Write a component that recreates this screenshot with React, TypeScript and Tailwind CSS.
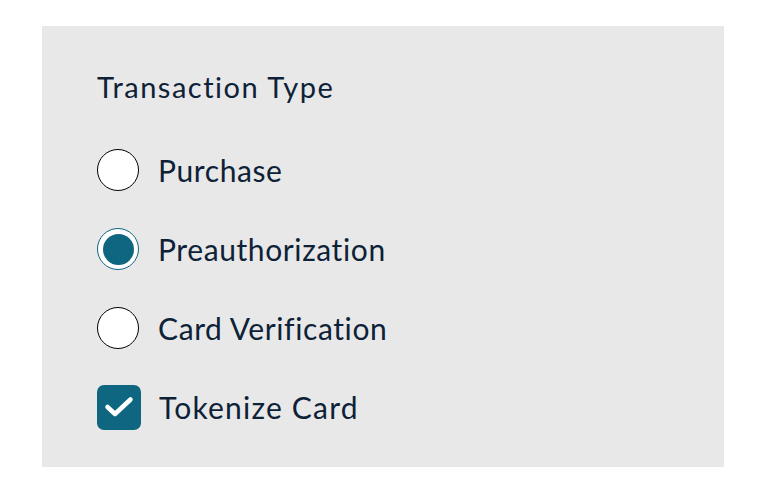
import React from 'react';

type Option = { label: string; checked: boolean };

const options: Option[] = [
  { label: 'Purchase', checked: false },
  { label: 'Preauthorization', checked: true },
  { label: 'Card Verification', checked: false },
];

const Radio: React.FC<Option> = ({ label, checked }) => (
  <label className="flex items-center gap-[19px] h-[44px]">
    {checked ? (
      <span className="w-[42px] h-[42px] rounded-full bg-white border-[1.5px] border-[#106680] flex items-center justify-center">
        <span className="w-[31px] h-[31px] rounded-full bg-[#0f6680]" />
      </span>
    ) : (
      <span className="w-[42px] h-[42px] rounded-full bg-white border-[1.5px] border-black" />
    )}
    <span>{label}</span>
  </label>
);

export default function App() {
  return (
    <div className="w-[764px] h-[498px] bg-white pt-[26px] pl-[42px]">
      <div
        className="w-[682px] h-[441px] bg-[#e8e8e8] pt-[43px] pl-[55px] text-[#0d2137] text-[30px] tracking-[0.6px]"
        style={{ fontFamily: 'Lato, "Noto Sans", sans-serif' }}
      >
        <h2 className="leading-[36px] text-[29px] tracking-[1.5px]">Transaction Type</h2>
        <div className="mt-[43px] flex flex-col gap-[35px]">
          {options.map((o) => (
            <Radio key={o.label} {...o} />
          ))}
          <label className="flex items-center gap-[18px] h-[44px]">
            <span className="w-[44px] h-[45px] rounded-[7px] bg-[#0e6680] flex items-center justify-center">
              <svg width="30" height="22" viewBox="0 0 30 22" fill="none">
                <path d="M3.5 11 L11 18 L26.5 3.5" stroke="white" strokeWidth="4.5" strokeLinecap="round" strokeLinejoin="round" />
              </svg>
            </span>
            <span className="tracking-[1.2px]">Tokenize Card</span>
          </label>
        </div>
      </div>
    </div>
  );
}
